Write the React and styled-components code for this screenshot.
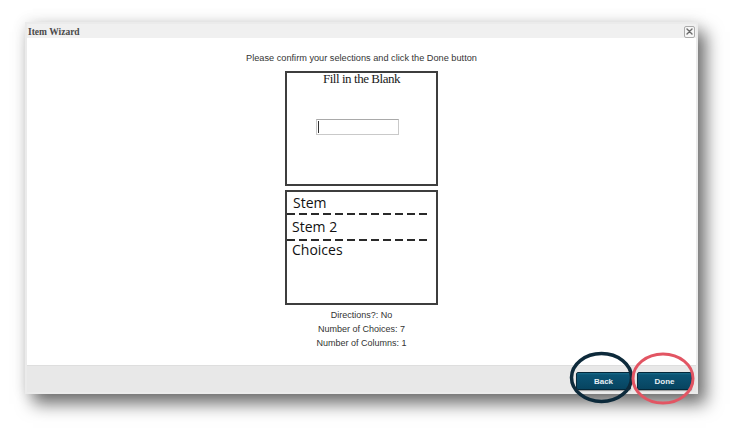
import React from 'react'
import styled, { createGlobalStyle } from 'styled-components'

const GlobalStyle = createGlobalStyle`
  html, body {
    margin: 0;
    background: #ffffff;
  }
  body {
    font-family: "Liberation Sans", Arial, sans-serif;
  }
`

function CloseIcon() {
  return (
    <svg width="7" height="7" viewBox="0 0 7 7">
      <path d="M1 1 L6 6 M6 1 L1 6" stroke="#6a6a6a" strokeWidth="1.4" strokeLinecap="round" />
    </svg>
  )
}

function App() {
  return (
    <Page>
      <GlobalStyle />
      <Dialog>
        <TitleBar>
          <Title>Item Wizard</Title>
          <CloseButton aria-label="close"><CloseIcon /></CloseButton>
        </TitleBar>
        <Body>
          <Prompt>Please confirm your selections and click the Done button</Prompt>
          <Frame $h={115}>
            <FrameTitle>Fill in the Blank</FrameTitle>
            <BlankInput><Caret /></BlankInput>
          </Frame>
          <Frame $h={115} $gap={4}>
            <Section $h={21} $pad={6}>Stem</Section>
            <Dashes />
            <Section $h={24} $pad={5}>Stem 2</Section>
            <Dashes />
            <Section $h={20} $pad={5} $top>Choices</Section>
          </Frame>
          <Summary>
            <div>Directions?: No</div>
            <div>Number of Choices: 7</div>
            <div>Number of Columns: 1</div>
          </Summary>
        </Body>
        <Footer>
          <WizardButton>Back</WizardButton>
          <WizardButton>Done</WizardButton>
        </Footer>
      </Dialog>
      <Marks width="748" height="447" viewBox="0 0 748 447">
        <ellipse cx="601.5" cy="377.5" rx="30" ry="24" fill="none" stroke="#0d2a3b" strokeWidth="3.5" />
        <ellipse cx="663" cy="378.5" rx="30" ry="24.5" fill="none" stroke="#e25563" strokeWidth="3" />
      </Marks>
    </Page>
  )
}

export default App

const Page = styled.div`
  position: relative;
  width: 748px;
  height: 447px;
  padding: 22px 0 0 25px;
  box-sizing: border-box;
  overflow: hidden;
`

const Dialog = styled.div`
  width: 673px;
  height: 372px;
  box-sizing: border-box;
  border: 2px solid #ebebeb;
  background: #f0f0f0;
  display: flex;
  flex-direction: column;
  box-shadow: 8px 10px 16px rgba(0, 0, 0, 0.55), 0 0 14px rgba(0, 0, 0, 0.1);
`

const TitleBar = styled.div`
  height: 14px;
  display: flex;
  align-items: center;
  justify-content: space-between;
`

const Title = styled.span`
  font-family: "Liberation Serif", "Times New Roman", serif;
  font-weight: bold;
  font-size: 9.5px;
  color: #4a4a4a;
  padding: 2px 0 0 1px;
`

const CloseButton = styled.div`
  width: 11px;
  height: 12px;
  margin: 1px 1px 0 0;
  box-sizing: border-box;
  border: 1px solid #ababab;
  border-radius: 2px;
  background: #f6f6f6;
  display: flex;
  align-items: center;
  justify-content: center;
`

const Body = styled.div`
  flex: 1;
  background: #ffffff;
  display: flex;
  flex-direction: column;
  align-items: center;
  padding-top: 14px;
  box-sizing: border-box;
`

const Prompt = styled.div`
  font-size: 9.2px;
  line-height: 12px;
  color: #353535;
`

const Frame = styled.div`
  width: 153px;
  height: ${p => p.$h}px;
  margin-top: ${p => p.$gap ?? 7}px;
  box-sizing: border-box;
  border: 2px solid #3e3e3e;
  display: flex;
  flex-direction: column;
`

const FrameTitle = styled.div`
  font-family: "Liberation Serif", "Times New Roman", serif;
  font-size: 13px;
  line-height: 12px;
  letter-spacing: -0.45px;
  color: #1a1a1a;
  text-align: center;
`

const BlankInput = styled.div`
  width: 83px;
  height: 16px;
  margin: 34px 0 0 29px;
  box-sizing: border-box;
  border: 1px solid #c9c9c9;
  border-top-color: #a9a9a9;
  display: flex;
  align-items: center;
  padding-left: 1px;
`

const Caret = styled.span`
  width: 1px;
  height: 12px;
  background: #333;
`

const Section = styled.div`
  height: ${p => p.$h}px;
  padding-left: ${p => p.$pad}px;
  display: flex;
  align-items: ${p => (p.$top ? 'flex-start' : 'center')};
  font-family: "Open Sans", "Noto Sans", sans-serif;
  font-size: 14px;
  line-height: 18px;
  color: #111;
`

const Dashes = styled.div`
  height: 2px;
  width: 141px;
  flex-shrink: 0;
  background: repeating-linear-gradient(to right, #2a2a2a 0 8px, transparent 8px 12px);
`

const Summary = styled.div`
  margin-top: 3px;
  font-size: 9px;
  line-height: 14px;
  color: #333;
  text-align: center;
`

const Footer = styled.div`
  height: 27px;
  background: #e8e8e8;
  border-top: 1px solid #dedede;
  display: flex;
  justify-content: flex-end;
  align-items: flex-start;
  gap: 6px;
  padding: 6px 4px 0 0;
  box-sizing: border-box;
`

const WizardButton = styled.div`
  width: 55px;
  height: 18px;
  box-sizing: border-box;
  border: 1px solid #04283a;
  border-radius: 2px;
  background: linear-gradient(#1a6c8a 0, #0b5474 2px, #074460 100%);
  box-shadow: 0 1px 1px rgba(0, 0, 0, 0.35);
  display: flex;
  align-items: center;
  justify-content: center;
  font-weight: bold;
  font-size: 8px;
  color: #e6eff4;
`

const Marks = styled.svg`
  position: absolute;
  left: 0;
  top: 0;
  pointer-events: none;
`
